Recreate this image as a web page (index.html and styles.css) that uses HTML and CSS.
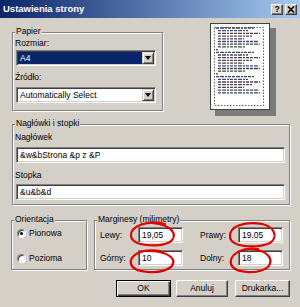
FILE: index.html
```html
<!DOCTYPE html>
<html lang="pl">
<head>
<meta charset="utf-8">
<title>Ustawienia strony</title>
<link rel="stylesheet" href="styles.css">
</head>
<body>
<div class="titlebar">
  <span class="title">Ustawienia strony</span>
  <span class="tbtn help">?</span>
  <span class="tbtn close"><svg width="8" height="7" viewBox="0 0 8 7"><path d="M1 0.5 L7 6.5 M7 0.5 L1 6.5" stroke="#000" stroke-width="1.6"/></svg></span>
</div>
<div class="content">
  <div class="toprow">
    <div class="group papier">
      <span class="legend">Papier</span>
      <div class="label">Rozmiar:</div>
      <div class="combo focused"><span class="value">A4</span><span class="arrow"><i></i></span></div>
      <div class="label l2">Źródło:</div>
      <div class="combo"><span class="value">Automatically Select</span><span class="arrow"><i></i></span></div>
    </div>
    <svg class="preview" width="66" height="93" viewBox="0 0 66 93">
      <rect x="5" y="5" width="61" height="88" fill="#7a7a7a"/>
      <rect x="0.5" y="0.5" width="59" height="86" fill="#fff" stroke="#404040"/>
      <rect x="4.5" y="4.5" width="49" height="78" fill="none" stroke="#606060" stroke-dasharray="1.5 1.5"/>
      <g stroke-width="1.3" stroke-dasharray="3 1 4 1 2 1 3 1">
        <line x1="6" y1="5" x2="44" y2="5" stroke="#444"/>
        <line x1="8" y1="7.7" x2="38" y2="7.7" stroke="#3a4a80"/>
        <line x1="8" y1="10.4" x2="50" y2="10.4" stroke="#444"/>
        <line x1="8" y1="13.1" x2="42" y2="13.1" stroke="#6a3a4a"/>
        <line x1="8" y1="15.8" x2="34" y2="15.8" stroke="#444"/>
        <line x1="8" y1="18.5" x2="48" y2="18.5" stroke="#3a4a80"/>
        <line x1="8" y1="21.2" x2="50" y2="21.2" stroke="#444"/>
        <line x1="8" y1="23.9" x2="36" y2="23.9" stroke="#444"/>
        <line x1="6" y1="26.6" x2="8" y2="26.6" stroke="#444"/>
        <line x1="6" y1="29.3" x2="44" y2="29.3" stroke="#444"/>
        <line x1="8" y1="32" x2="38" y2="32" stroke="#3a4a80"/>
        <line x1="8" y1="34.7" x2="50" y2="34.7" stroke="#444"/>
        <line x1="8" y1="37.4" x2="42" y2="37.4" stroke="#6a3a4a"/>
        <line x1="8" y1="40.1" x2="34" y2="40.1" stroke="#444"/>
        <line x1="8" y1="42.8" x2="48" y2="42.8" stroke="#3a4a80"/>
        <line x1="8" y1="45.5" x2="50" y2="45.5" stroke="#444"/>
        <line x1="8" y1="48.2" x2="36" y2="48.2" stroke="#444"/>
        <line x1="6" y1="50.9" x2="8" y2="50.9" stroke="#444"/>
        <line x1="6" y1="53.6" x2="44" y2="53.6" stroke="#444"/>
        <line x1="8" y1="56.3" x2="38" y2="56.3" stroke="#3a4a80"/>
        <line x1="8" y1="59" x2="50" y2="59" stroke="#444"/>
        <line x1="8" y1="61.7" x2="42" y2="61.7" stroke="#6a3a4a"/>
        <line x1="8" y1="64.4" x2="34" y2="64.4" stroke="#444"/>
        <line x1="8" y1="67.1" x2="48" y2="67.1" stroke="#3a4a80"/>
        <line x1="8" y1="69.8" x2="50" y2="69.8" stroke="#444"/>
      </g>
    </svg>
  </div>

  <div class="group naglowki">
    <span class="legend">Nagłówki i stopki</span>
    <div class="label">Nagłówek</div>
    <div class="field wide">&amp;w&amp;bStrona &amp;p z &amp;P</div>
    <div class="label l3">Stopka</div>
    <div class="field wide">&amp;u&amp;b&amp;d</div>
  </div>

  <div class="bottomrow">
    <div class="group orient">
      <span class="legend">Orientacja</span>
      <div class="radio-row"><span class="radio checked"></span>Pionowa</div>
      <div class="radio-row r2"><span class="radio"></span>Pozioma</div>
    </div>
    <div class="group margins">
      <span class="legend">Marginesy (milimetry)</span>
      <div class="mgrid">
        <span class="mlabel">Lewy:</span><span class="field small">19,05</span>
        <span class="mlabel">Prawy:</span><span class="field small">19,05</span>
        <span class="mlabel">Górny:</span><span class="field small">10</span>
        <span class="mlabel">Dolny:</span><span class="field small">18</span>
      </div>
    </div>
  </div>

  <div class="buttons">
    <span class="btn default ok"><span>OK</span></span>
    <span class="btn cancel"><span>Anuluj</span></span>
    <span class="btn printer"><span>Drukarka...</span></span>
  </div>
</div>

<svg class="marks" width="300" height="307" viewBox="0 0 300 307">
  <g fill="none" stroke="#e00000" stroke-width="2.2" stroke-linecap="round">
    <path d="M165 224 C147 220, 130 226, 131 236 C132 246, 158 248, 170 242 C178 236, 174 225, 152 223"/>
    <path d="M160 251 C142 248, 129 255, 131 264 C133 273, 160 275, 171 267 C177 260, 171 252, 150 251"/>
    <path d="M262 224 C245 221, 229 226, 230 237 C231 247, 256 249, 270 243 C279 237, 275 224, 255 223"/>
    <path d="M258 249 C241 247, 229 255, 231 264 C233 273, 258 275, 268 267 C274 260, 269 250, 250 249"/>
  </g>
</svg>
</body>
</html>
```

FILE: styles.css
```css
* { box-sizing: border-box; margin: 0; padding: 0; }
html, body { width: 300px; height: 307px; overflow: hidden; }
body {
  background: #D4D0C8;
  font-family: "Liberation Sans", Arial, sans-serif;
  font-size: 8.5px;
  color: #000;
  position: relative;
}

.titlebar {
  height: 18px;
  display: flex;
  align-items: center;
  padding: 0 3px 0 3px;
  background: linear-gradient(90deg, #0A246A 0%, #A6CAF0 100%);
}
.title {
  flex: 1;
  color: #fff;
  font-weight: bold;
  font-size: 9.5px;
  line-height: 12px;
}
.tbtn {
  width: 12px;
  height: 11px;
  margin-left: 2px;
  display: flex;
  align-items: center;
  justify-content: center;
  background: #D4D0C8;
  border-top: 1px solid #fff;
  border-left: 1px solid #fff;
  border-right: 1px solid #404040;
  border-bottom: 1px solid #404040;
  box-shadow: inset -1px -1px 0 #808080;
  font-weight: bold;
  font-size: 8.5px;
  line-height: 9px;
}

.content { padding: 0 10px 0 12px; }

.toprow { display: flex; align-items: flex-start; }

.group {
  position: relative;
  border: 1px solid #808080;
  box-shadow: inset 1px 1px 0 #fff, 1px 1px 0 #fff;
}
.legend {
  position: absolute;
  top: -7px;
  left: 2px;
  padding: 0 1px;
  line-height: 11px;
  background: #D4D0C8;
}
.label { line-height: 11px; }

.papier {
  width: 151px;
  margin-top: 14px;
  padding: 5px 6px 7px 3px;
}
.papier .label { margin-bottom: 1px; margin-left: -1px; }
.papier .l2 { margin-top: 6px; margin-bottom: 4px; }

.combo {
  height: 16px;
  display: flex;
  padding: 1px;
  background: #fff;
  border-top: 1px solid #808080;
  border-left: 1px solid #808080;
  border-right: 1px solid #fff;
  border-bottom: 1px solid #fff;
  box-shadow: inset 1px 1px 0 #404040, inset -1px -1px 0 #D4D0C8;
}
.combo .value {
  flex: 1;
  padding-left: 2px;
  line-height: 12px;
  white-space: nowrap;
  overflow: hidden;
}
.combo.focused .value { background: #0A246A; color: #fff; }
.combo .arrow {
  width: 12px;
  display: flex;
  align-items: center;
  justify-content: center;
  background: #D4D0C8;
  border-top: 1px solid #D4D0C8;
  border-left: 1px solid #D4D0C8;
  border-right: 1px solid #404040;
  border-bottom: 1px solid #404040;
  box-shadow: inset 1px 1px 0 #fff, inset -1px -1px 0 #808080;
}
.combo .arrow i {
  width: 0;
  height: 0;
  border-left: 3.5px solid transparent;
  border-right: 3.5px solid transparent;
  border-top: 4px solid #000;
}

.preview { margin: 5px 0 0 47px; display: block; }

.naglowki {
  margin-top: 8px;
  padding: 7px 4px 4px 3px;
}
.naglowki .label { margin-bottom: 4px; margin-left: -1px; }
.naglowki .l3 { margin-top: 7px; margin-bottom: 3px; }

.field {
  display: block;
  height: 16px;
  padding-left: 3px;
  line-height: 12px;
  background: #fff;
  border-top: 1px solid #808080;
  border-left: 1px solid #808080;
  border-right: 1px solid #fff;
  border-bottom: 1px solid #fff;
  box-shadow: inset 1px 1px 0 #404040, inset -1px -1px 0 #D4D0C8;
  padding-top: 1px;
  white-space: nowrap;
}

.bottomrow {
  display: flex;
  gap: 7px;
  margin-top: 15px;
}
.orient {
  width: 76px;
  height: 50px;
  margin-left: -1px;
  padding: 7px 4px 5px 5px;
}
.radio-row {
  display: flex;
  align-items: center;
  height: 11px;
  line-height: 11px;
}
.radio-row.r2 { margin-top: 14px; }
.radio {
  width: 9px;
  height: 9px;
  margin-right: 3px;
  border-radius: 50%;
  background: #fff;
  border: 1px solid;
  border-color: #808080 #fff #fff #808080;
  box-shadow: inset 1px 1px 0 #404040;
  display: flex;
  align-items: center;
  justify-content: center;
}
.radio.checked::after {
  content: "";
  width: 3px;
  height: 3px;
  border-radius: 50%;
  background: #000;
}

.margins {
  width: 196px;
  height: 50px;
  padding: 6px 6px 3px 5px;
}
.mgrid {
  display: grid;
  grid-template-columns: 38px 62px 38px 45px;
  grid-auto-rows: 16px;
  row-gap: 7px;
  align-items: center;
}
.mlabel { line-height: 11px; }
.field.small { width: 45px; }

.buttons {
  display: flex;
  justify-content: flex-end;
  margin-top: 10px;
}
.btn {
  height: 17px;
  display: flex;
  align-items: center;
  justify-content: center;
  background: #D4D0C8;
  border-top: 1px solid #fff;
  border-left: 1px solid #fff;
  border-right: 1px solid #404040;
  border-bottom: 1px solid #404040;
  box-shadow: inset -1px -1px 0 #808080;
  line-height: 11px;
}
.btn.default {
  border: 1px solid #000;
  box-shadow: inset 1px 1px 0 #fff, inset -1px -1px 0 #404040, inset -2px -2px 0 #808080;
}
.ok { width: 55px; }
.cancel { width: 52px; margin-left: 5px; }
.printer { width: 55px; margin-left: 7px; }

.marks {
  position: absolute;
  top: 0;
  left: 0;
  pointer-events: none;
}
```
